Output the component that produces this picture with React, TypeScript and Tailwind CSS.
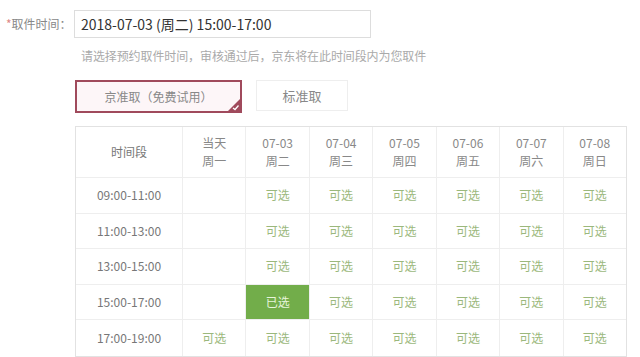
const days = [
  { date: "当天", week: "周一" },
  { date: "07-03", week: "周二" },
  { date: "07-04", week: "周三" },
  { date: "07-05", week: "周四" },
  { date: "07-06", week: "周五" },
  { date: "07-07", week: "周六" },
  { date: "07-08", week: "周日" },
];

// 0 = empty, 1 = 可选, 2 = 已选
const rows = [
  { time: "09:00-11:00", cells: [0, 1, 1, 1, 1, 1, 1] },
  { time: "11:00-13:00", cells: [0, 1, 1, 1, 1, 1, 1] },
  { time: "13:00-15:00", cells: [0, 1, 1, 1, 1, 1, 1] },
  { time: "15:00-17:00", cells: [0, 2, 1, 1, 1, 1, 1] },
  { time: "17:00-19:00", cells: [1, 1, 1, 1, 1, 1, 1] },
];

export default function App() {
  return (
    <div
      className="h-[357px] w-[640px] overflow-hidden bg-white text-[12px] text-[#666]"
      style={{ fontFamily: '"Noto Sans CJK SC", "Noto Sans", sans-serif' }}
    >
      <div className="flex items-center pt-[10px]">
        <span className="w-[74px] pl-[6px] text-[12px] text-[#888]">
          <span className="text-[#d88]">*</span>取件时间：
        </span>
        <div className="flex h-[28px] w-[297px] items-center border border-[#ddd] pl-[6px] text-[14px] text-[#333]">
          2018-07-03 (周二) 15:00-17:00
        </div>
      </div>
      <p className="ml-[81px] mt-[10px] text-[12px] leading-[16px] tracking-[-0.1px] text-[#aaa]">
        请选择预约取件时间，审核通过后，京东将在此时间段内为您取件
      </p>

      <div className="ml-[75px] mt-[16px] flex gap-[14px]">
        <div className="relative flex h-[33px] w-[167px] items-center justify-center border-2 border-[#a04a5c] bg-[#fdf6f8] text-[12px] text-[#888]">
          京准取（免费试用）
          <svg className="absolute bottom-0 right-0" width="12" height="12" viewBox="0 0 12 12">
            <path d="M12 0 L12 12 L0 12 Z" fill="#a04a5c" />
            <path d="M5 9 L7 10.5 L10.5 6.5" stroke="#fff" strokeWidth="1.3" fill="none" />
          </svg>
        </div>
        <div className="flex h-[31px] w-[92px] items-center justify-center border border-[#eee] text-[13px] text-[#888]">
          标准取
        </div>
      </div>

      <div className="ml-[75px] mt-[13px] grid w-[552px] grid-cols-[106px_repeat(7,1fr)] border border-[#e2e2e2] text-center">
        <div className="flex h-[51px] items-center justify-center border-b border-[#eee] text-[12px] text-[#777]">
          时间段
        </div>
        {days.map((d) => (
          <div
            key={d.week}
            className="flex h-[51px] flex-col items-center justify-center border-b border-l border-[#eee] text-[12px] leading-[18px] text-[#888]"
          >
            <span>{d.date}</span>
            <span>{d.week}</span>
          </div>
        ))}
        {rows.map((r, ri) => (
          <div key={r.time} className="contents">
            <div
              className={`flex h-[35.5px] items-center justify-center text-[12px] text-[#777] ${
                ri < rows.length - 1 ? "border-b border-[#eee]" : ""
              }`}
            >
              {r.time}
            </div>
            {r.cells.map((c, ci) => (
              <div
                key={ci}
                className={`flex h-[35.5px] items-center justify-center border-l border-[#eee] text-[12px] ${
                  ri < rows.length - 1 ? "border-b" : ""
                } ${c === 2 ? "bg-[#72ad4a] text-[#e8f5dc]" : "text-[#9bb87c]"}`}
              >
                {c === 1 ? "可选" : c === 2 ? "已选" : ""}
              </div>
            ))}
          </div>
        ))}
      </div>
    </div>
  );
}
